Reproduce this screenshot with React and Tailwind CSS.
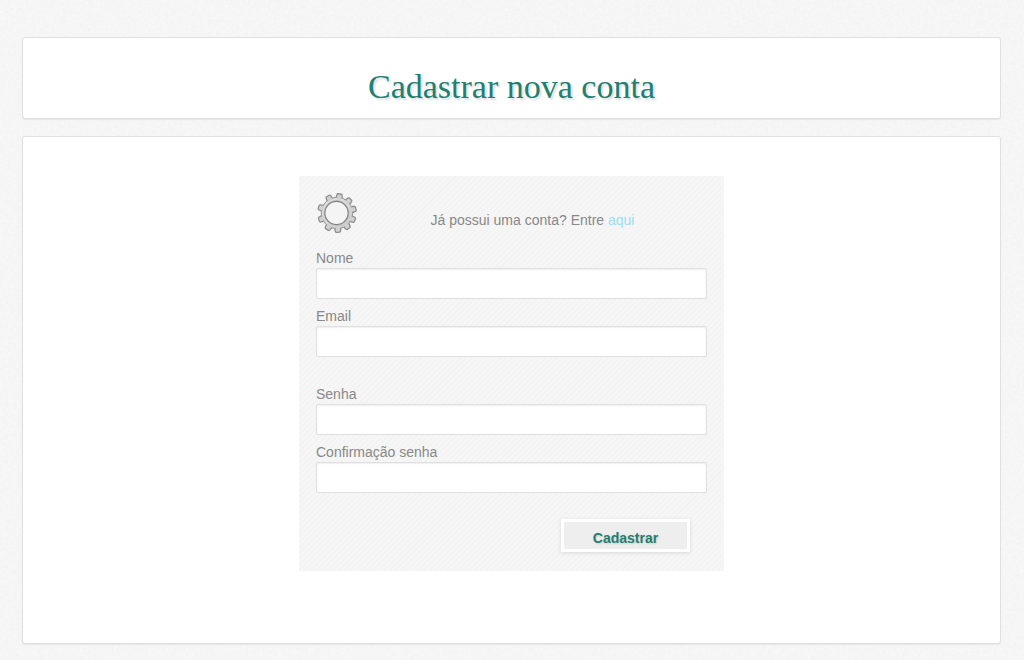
import React, { useState } from 'react';

// position of each tooth around the gear, in degrees clockwise from the top
const teeth = [8, 44, 77, 112, 143, 177, 211, 249, 288, 332];

const GearIcon = () => (
  <svg viewBox="0 0 42 42" className="size-[42px] shrink-0" aria-hidden="true">
    <defs>
      <linearGradient id="metal" x1="0" y1="0" x2="1" y2="1">
        <stop offset="0" stopColor="#e0e0e0" />
        <stop offset="0.5" stopColor="#dadada" />
        <stop offset="1" stopColor="#c4c4c4" />
      </linearGradient>
    </defs>
    {teeth.map((angle) => (
      <path
        key={angle}
        d="M17.8 6.5 L18.4 2.6 Q18.6 1.8 19.4 1.7 H22.6 Q23.4 1.8 23.6 2.6 L24.2 6.5 Z"
        transform={`rotate(${angle} 21 21)`}
        fill="#cccccc"
        stroke="#8a8a8a"
        strokeWidth="1.2"
      />
    ))}
    <circle cx="21" cy="21" r="15.8" fill="url(#metal)" stroke="#969696" strokeWidth="1" />
    {teeth.map((angle) => (
      <path
        key={angle}
        d="M18.8 7 L19.3 2.8 H22.7 L23.2 7 Z"
        transform={`rotate(${angle} 21 21)`}
        fill="#d0d0d0"
      />
    ))}
    <circle cx="20.5" cy="21" r="12.4" fill="none" stroke="#b8b8b8" strokeWidth="1" />
    <circle cx="20.5" cy="21" r="11.6" fill="#f4f4f4" stroke="#828282" strokeWidth="1.1" />
  </svg>
);

const PaperBackground = () => (
  <svg className="absolute inset-0 size-full" aria-hidden="true">
    <filter id="grain" x="0" y="0" width="100%" height="100%">
      <feTurbulence type="fractalNoise" baseFrequency="0.35" numOctaves="2" seed="4" />
      <feColorMatrix values="0 0 0 0 0.8  0 0 0 0 0.8  0 0 0 0 0.8  0.5 0 0 0 -0.15" />
    </filter>
    <rect width="100%" height="100%" filter="url(#grain)" />
  </svg>
);

const Field = ({ id, label, type = 'text', value, onChange }) => (
  <div>
    <label htmlFor={id} className="block leading-5">
      {label}
    </label>
    <input
      id={id}
      name={id}
      type={type}
      value={value}
      onChange={onChange}
      className="block h-[31px] w-full rounded-xs border border-[#dfdfdf] bg-white px-2 shadow-[inset_0_1px_2px_#eeeeee] outline-none focus:border-[#1f7f70]"
    />
  </div>
);

const App = () => {
  const [form, setForm] = useState({ nome: '', email: '', senha: '', confirmacao: '' });

  const handleChange = (e) => {
    setForm({ ...form, [e.target.name]: e.target.value });
  };

  const handleSubmit = (e) => {
    e.preventDefault();
  };

  return (
    <div className="relative min-h-screen bg-[#f7f7f7] pt-[37px] pr-[23px] pb-4 pl-[22px] font-['Liberation_Sans',Arial,sans-serif] text-sm text-[#888888]">
      <PaperBackground />
      <div className="relative flex flex-col gap-[17px]">
        <header className="rounded-[3px] border border-[#e0e0e0] bg-white pt-[29px] pb-[11px] shadow-[0_1px_1px_#e6e6e6]">
          <h1 className="text-center font-['Georgia','Liberation_Serif',serif] text-[34px] leading-10 text-[#1f7f70] [text-shadow:2px_2px_2px_#dddddd]">
            Cadastrar nova conta
          </h1>
        </header>

        <main className="rounded-[3px] border border-[#e0e0e0] bg-white px-4 pt-[39px] pb-[72px] shadow-[0_1px_1px_#e6e6e6]">
          <form
            onSubmit={handleSubmit}
            className="mx-auto max-w-[425px] bg-[#f4f4f4] bg-[repeating-linear-gradient(135deg,#f6f6f6_0px,#f6f6f6_2px,#f1f1f1_3px,#f6f6f6_4px)] px-[17px] pt-4 pb-[19px]"
          >
            <div className="flex items-center">
              <GearIcon />
              <p className="flex-1 pt-[14px] text-center">
                Já possui uma conta? Entre{' '}
                <a href="#entrar" className="text-[#99dfee]">
                  aqui
                </a>
              </p>
            </div>

            <div className="mt-[14px] flex flex-col gap-[7px]">
              <Field id="nome" label="Nome" value={form.nome} onChange={handleChange} />
              <Field id="email" label="Email" type="email" value={form.email} onChange={handleChange} />
            </div>
            <div className="mt-[27px] flex flex-col gap-[7px]">
              <Field id="senha" label="Senha" type="password" value={form.senha} onChange={handleChange} />
              <Field
                id="confirmacao"
                label="Confirmação senha"
                type="password"
                value={form.confirmacao}
                onChange={handleChange}
              />
            </div>

            <div className="mt-[26px] flex justify-end pr-[17px]">
              <button
                type="submit"
                className="h-[33px] w-[129px] cursor-pointer border-[3px] border-white bg-[#eeeeee] pt-1 font-bold text-[#1f7f70] shadow-[0_1px_4px_#d8d8d8] [text-shadow:1px_1px_2px_#cccccc]"
              >
                Cadastrar
              </button>
            </div>
          </form>
        </main>
      </div>
    </div>
  );
};

export default App;
